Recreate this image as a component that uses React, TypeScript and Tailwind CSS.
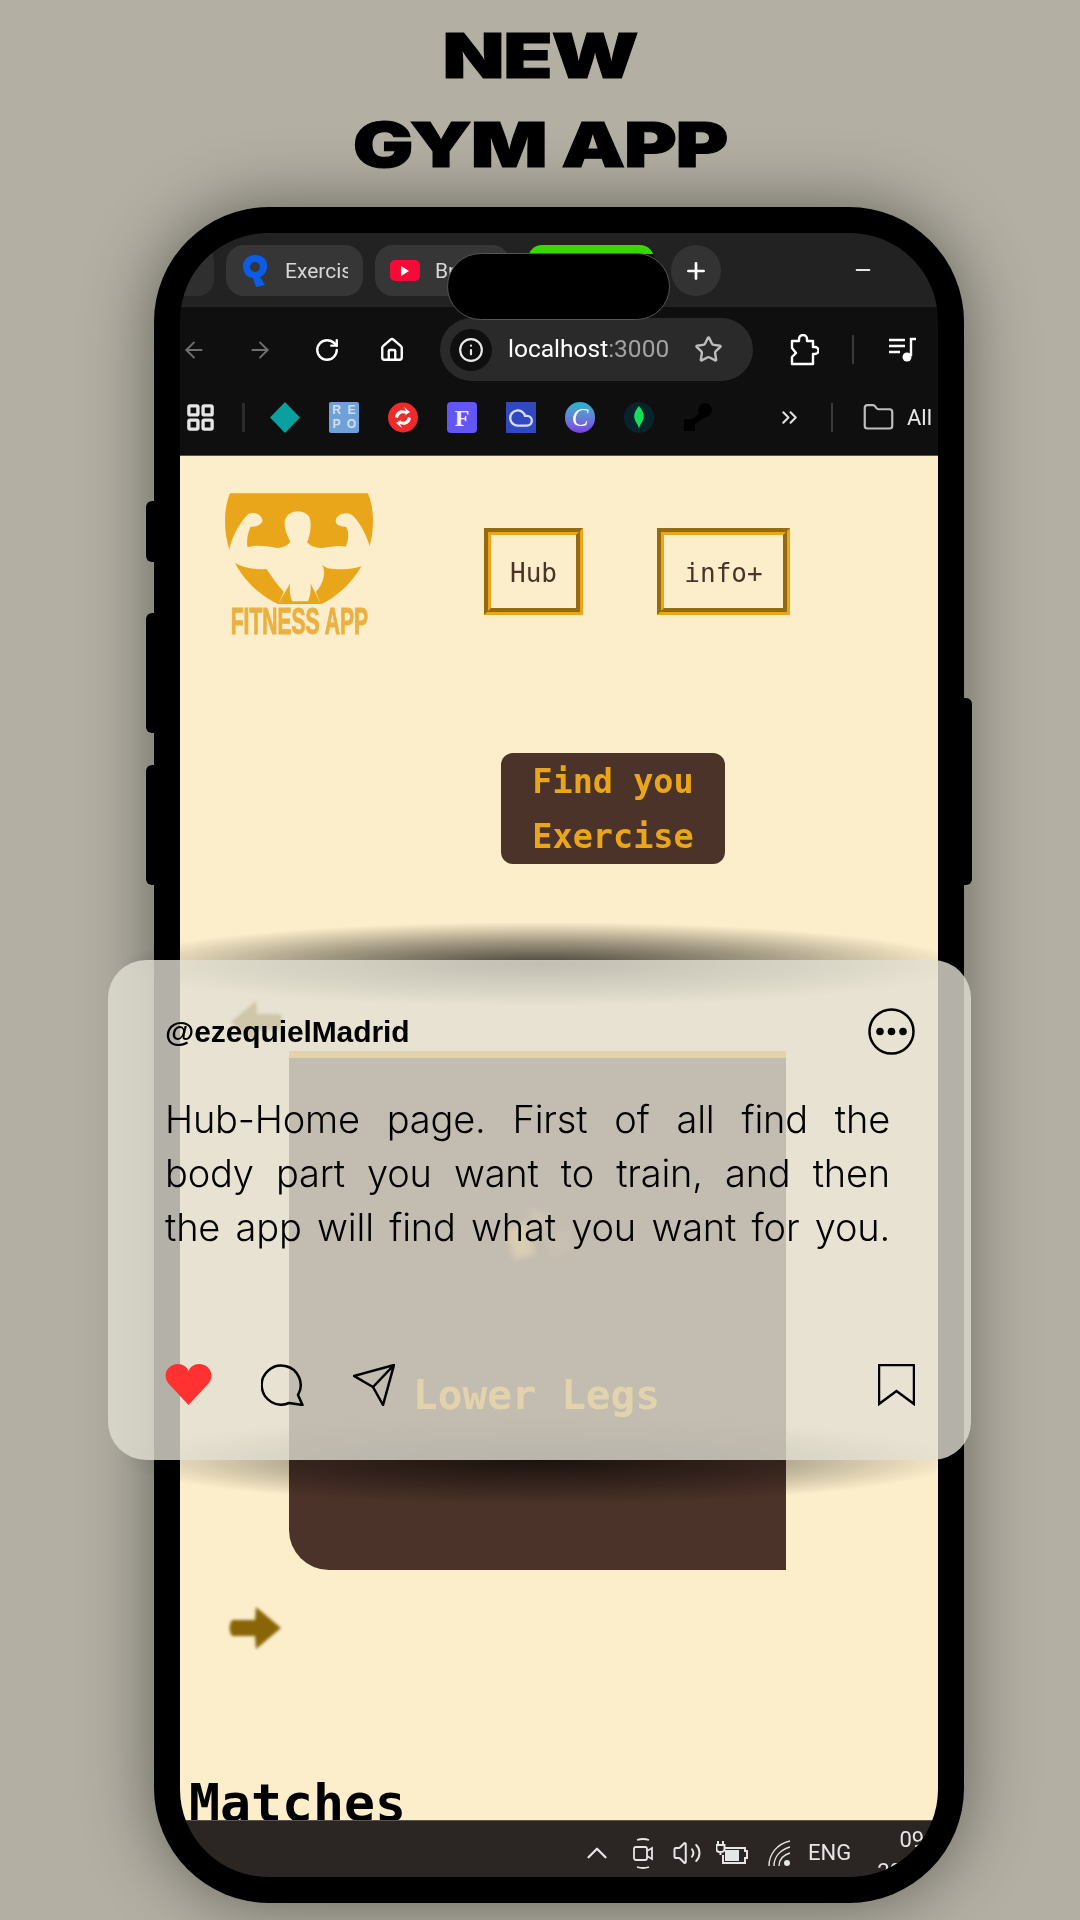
import React from 'react';
import { ArrowLeft, ArrowRight, ChevronUp, Cloud, Folder, House, Info, LayoutGrid, ChevronsRight, Minus, Plus, RotateCw, Star, Volume2 } from 'lucide-react';

const mono = { fontFamily: '"DejaVu Sans Mono", monospace' };

function FitnessLogo() {
  return (
    <div className="w-[148px] flex flex-col items-center">
      <svg width="148" height="112" viewBox="30 25 445 336" className="block">
        <path d="M45 25 H460 Q475 60 475 110 C475 230 400 320 320 358 H190 C105 320 30 230 30 110 Q30 60 45 25 Z" fill="#e9a61b" />
        <path
          d="M100 88 C115 80 140 88 143 107 C140 122 120 126 107 126 C98 145 94 170 98 188 C125 180 160 184 185 190 C205 190 222 182 226 170 C210 140 204 110 214 98 C226 74 272 74 284 98 C292 118 286 150 277 173 C287 184 300 190 320 190 C345 188 372 180 393 186 C403 165 403 140 394 126 C380 126 360 122 363 105 C368 88 395 78 414 92 C442 118 467 175 472 215 C464 244 420 258 360 253 C345 253 332 250 322 240 C335 262 325 300 303 322 L318 358 L287 296 C290 320 285 335 280 350 H232 C227 335 222 320 226 296 L190 358 L207 322 C185 298 170 275 155 253 C120 258 60 248 40 215 C43 170 70 118 100 88 Z"
          fill="#fceecb"
        />
      </svg>
      <div className="mt-[3px] h-[28px] leading-[28px] text-[36px] font-bold text-[#ebb041] whitespace-nowrap scale-x-[0.585] [-webkit-text-stroke:1px_#ebb041]" style={{ fontFamily: '"Liberation Sans Narrow", "Liberation Sans", sans-serif' }}>
        FITNESS APP
      </div>
    </div>
  );
}

function GroovedLink({ label, width }: { label: string; width: string }) {
  return (
    <a className={`${width} h-[87px] pt-[3px] flex items-center justify-center border-[7px] [border-style:groove] border-[#e9a61b] text-[26px] text-[#4b3329]`} style={mono}>
      {label}
    </a>
  );
}

function PageArrow({ flip }: { flip?: boolean }) {
  return (
    <svg width="56" height="46" viewBox="0 0 56 46" className={`blur-[1.5px] block ${flip ? 'rotate-180' : ''}`}>
      <path d="M5 15 H28 L29 2 L54 23 L29 44 L28 31 H5 Q0 23 5 15 Z" fill="#8a6508" />
    </svg>
  );
}

function BrowserTabs() {
  return (
    <div className="h-[74px] shrink-0 bg-[#222222] flex items-start pt-[12px]">
      <div className="w-[34px] h-[51px] bg-[#2f2f2f] rounded-r-[16px]" />
      <div className="ml-[12px] w-[137px] h-[51px] bg-[#363636] rounded-[18px] flex items-center pl-[16px]">
        <svg width="26" height="33" viewBox="0 0 26 33">
          <path d="M13 1 C22 1 26 7 25 14 C24 20 20 22 18 23 L23 31 L14 33 L11 24 C5 24 1 19 1 12 C1 6 6 1 13 1 Z M13 8 A5 5 0 1 0 13 18 A5 5 0 1 0 13 8 Z" fill="#0b5de8" fillRule="evenodd" />
        </svg>
        <span className="ml-[17px] mt-[3px] w-[63px] overflow-hidden whitespace-nowrap text-[21px] text-[#d8d8d8]" style={{ fontFamily: 'Roboto, sans-serif' }}>Exercis</span>
      </div>
      <div className="ml-[12px] w-[135px] h-[51px] bg-[#363636] rounded-[18px] flex items-center pl-[15px]">
        <div className="w-[30px] h-[21px] bg-[#f50a38] rounded-[5px] flex items-center justify-center">
          <svg width="10" height="10" viewBox="0 0 10 10"><path d="M1 0 L9 5 L1 10 Z" fill="#ffffff" /></svg>
        </div>
        <span className="ml-[15px] mt-[3px] text-[21px] text-[#d8d8d8]" style={{ fontFamily: 'Roboto, sans-serif' }}>Br</span>
      </div>
      <div className="ml-[18px] w-[126px] h-[62px] bg-[#0f0f10] rounded-t-[14px] overflow-hidden">
        <div className="h-[9px] bg-[#39d700] rounded-t-[14px]" />
      </div>
      <div className="ml-[17px] w-[50px] h-[51px] bg-[#333333] rounded-full flex items-center justify-center text-white">
        <Plus size={26} strokeWidth={2.5} />
      </div>
      <Minus size={22} strokeWidth={2} className="ml-[131px] mt-[14px] text-[#e6e6e6]" />
    </div>
  );
}

function ToolbarRow() {
  return (
    <div className="mt-[11px] h-[63px] flex items-center">
      <ArrowLeft size={26} strokeWidth={1.8} className="ml-[1px] text-[#6f6f6f]" />
      <ArrowRight size={26} strokeWidth={1.8} className="ml-[40px] text-[#6f6f6f]" />
      <RotateCw size={26} strokeWidth={2.2} className="ml-[41px] text-white" />
      <House size={26} strokeWidth={2.2} className="ml-[39px] text-white" />
      <div className="ml-[35px] w-[313px] h-[63px] bg-[#2a2a2a] rounded-full flex items-center pl-[10px]">
        <div className="w-[42px] h-[42px] bg-[#0f0f10] rounded-full flex items-center justify-center text-[#e8e8e8]">
          <Info size={26} strokeWidth={2} />
        </div>
        <span className="ml-[16px] text-[24.5px] text-white whitespace-nowrap" style={{ fontFamily: 'Roboto, sans-serif' }}>
          localhost<span className="text-[#a3a3a3]">:3000</span>
        </span>
        <Star size={29} strokeWidth={2} className="ml-auto mr-[30px] text-[#bdbdbd]" />
      </div>
      <svg width="31" height="32" viewBox="0 0 31 32" className="ml-[35px]" fill="none" stroke="#ffffff" strokeWidth="2.4" strokeLinejoin="round">
        <path d="M4 7 H11 V5 A4 4 0 0 1 19 5 V7 H25 V13 H27 A3.5 3.5 0 0 1 27 20 H25 V30 H4 V23 L8 19 L4 14 Z" />
      </svg>
      <div className="ml-[33px] w-[2px] h-[29px] bg-[#3a3a3a]" />
      <svg width="27" height="25" viewBox="0 0 27 25" className="ml-[35px]" fill="none" stroke="#ffffff" strokeWidth="2.4">
        <path d="M0 3 H16 M0 9 H16 M0 15 H11 M22 19 V2 H27" />
        <circle cx="18" cy="20" r="4.5" fill="#ffffff" stroke="none" />
      </svg>
    </div>
  );
}

function BookmarksRow() {
  return (
    <div className="mt-[21px] h-[31px] flex items-center">
      <LayoutGrid size={31} strokeWidth={2.6} className="ml-[5px] text-[#e5e5e5]" />
      <div className="ml-[26px] w-[3px] h-[29px] bg-[#2c2c2c]" />
      <div className="ml-[25px] flex items-center gap-[29px]">
        <svg width="30" height="31" viewBox="0 0 30 31"><path d="M15 0 L30 15.5 L15 31 L0 15.5 Z" fill="#0aa09f" /></svg>
        <div className="w-[30px] h-[31px] bg-[#6fa0d8] rounded-[2px] grid grid-cols-2 place-items-center text-[12px] leading-[13px] font-bold text-[#cfe0f2] py-[2px]" style={{ fontFamily: '"Liberation Sans", sans-serif' }}>
          <span>R</span><span>E</span><span>P</span><span>O</span>
        </div>
        <svg width="30" height="31" viewBox="0 0 30 31">
          <circle cx="15" cy="15.5" r="15" fill="#ee2a2a" />
          <path d="M7 15 C8 9 13 7 18 9 L16 5 L22 10 L16 14 L18 12 C14 10 11 12 10 16 Z M23 16 C22 22 17 24 12 22 L14 26 L8 21 L14 17 L12 19 C16 21 19 19 20 15 Z" fill="#ffffff" />
        </svg>
        <div className="w-[30px] h-[31px] bg-[#6257f5] rounded-[4px] flex items-center justify-center text-[24px] font-bold text-[#f0f0ff]" style={{ fontFamily: '"Liberation Serif", serif' }}>F</div>
        <div className="w-[30px] h-[31px] bg-[#3048c0] flex items-center justify-center text-[#d7dcf7]">
          <Cloud size={26} strokeWidth={2.2} />
        </div>
        <div className="w-[30px] h-[31px] rounded-full bg-linear-to-b from-[#12b5cb] to-[#7a3be0] flex items-center justify-center text-[25px] italic text-white" style={{ fontFamily: '"Liberation Serif", serif' }}>C</div>
        <div className="w-[30px] h-[31px] rounded-full bg-[#07242c] flex items-center justify-center">
          <svg width="12" height="23" viewBox="0 0 12 23"><path d="M6 0 C10 5 12 9 10 14 C9 17 7 18 6 23 C5 18 3 17 2 14 C0 9 2 5 6 0 Z" fill="#13e05a" /></svg>
        </div>
        <svg width="30" height="31" viewBox="0 0 30 31">
          <circle cx="22" cy="8" r="7" fill="#000000" />
          <path d="M17 10 L24 14 L12 22 L12 29 H1 V17 H10 Z" fill="#000000" />
        </svg>
      </div>
      <ChevronsRight size={25} strokeWidth={2} className="ml-[64px] text-[#e0e0e0]" />
      <div className="ml-[29px] w-[2px] h-[29px] bg-[#3a3a3a]" />
      <Folder size={33} strokeWidth={1.6} className="ml-[29px] text-[#bdbdbd]" />
      <span className="ml-[12px] text-[22px] text-[#e8e8e8]" style={{ fontFamily: 'Roboto, sans-serif' }}>All</span>
    </div>
  );
}

function PageBody() {
  return (
    <div className="flex-1 min-h-0 bg-[#fceecb] overflow-hidden relative">
      <div className="flex items-start pl-[45px] pt-[37px]">
        <FitnessLogo />
        <div className="ml-[111px] mt-[35px] flex gap-[74px]">
          <GroovedLink label="Hub" width="w-[99px]" />
          <GroovedLink label="info+" width="w-[133px]" />
        </div>
      </div>
      <button className="block mt-[117px] ml-[321px] w-[224px] h-[111px] bg-[#4b3329] rounded-[12px] text-[33.5px] font-bold leading-[55px] text-[#e9a61b]" style={mono}>
        Find you<br />Exercise
      </button>
      <div className="ml-[49px] mt-[135px]">
        <PageArrow flip />
      </div>
      <div className="ml-[109px] mt-[6px] w-[497px] h-[519px] bg-[#4b3329] rounded-bl-[40px] border-t-[7px] border-[#e9a61b] flex flex-col items-center">
        <svg width="74" height="56" viewBox="0 0 74 56" className="mt-[148px] blur-[3px] opacity-80">
          <path d="M4 26 L26 14 L34 48 L14 54 Z" fill="#d79a3a" />
          <path d="M28 2 L50 8 L44 24 L32 20 Z" fill="#8f6a50" />
          <path d="M44 30 L70 20 L72 44 L50 54 Z" fill="#6b4a3a" />
        </svg>
        <span className="mt-[109px] ml-[-2px] text-[41px] font-bold text-[#e9a61b] leading-[48px] blur-[0.5px]" style={mono}>Lower Legs</span>
      </div>
      <div className="ml-[47px] mt-[35px]">
        <PageArrow />
      </div>
      <h2 className="ml-[9px] mt-[122px] text-[51.5px] font-bold leading-[60px] text-black" style={mono}>Matches</h2>
    </div>
  );
}

function TaskBar() {
  return (
    <div className="h-[57px] shrink-0 bg-[#2b2523] border-t border-[#5a5450] flex items-center text-[#e6e6e6] overflow-hidden">
      <ChevronUp size={34} strokeWidth={1.6} className="ml-[400px] mt-[8px]" />
      <svg width="22" height="31" viewBox="0 0 22 31" className="ml-[18px] mt-[8px]" fill="none" stroke="currentColor" strokeWidth="1.8">
        <path d="M5 2 Q11 0 17 2 M5 29 Q11 31 17 29" />
        <rect x="2" y="9" width="13" height="13" rx="2" />
        <path d="M15 13 L20 10 V21 L15 18" />
      </svg>
      <Volume2 size={30} strokeWidth={1.6} className="ml-[18px] mt-[8px]" />
      <svg width="32" height="26" viewBox="0 0 32 26" className="ml-[14px] mt-[8px]" fill="none" stroke="currentColor" strokeWidth="2">
        <path d="M2 1 V5 M7 1 V5 M0.5 5 H8.5 V9 Q8.5 12 4.5 12 Q0.5 12 0.5 9 Z M4.5 12 V15" />
        <path d="M9 8 H29 V11 H31 V18 H29 V23 H7 V15" />
        <rect x="9" y="10" width="14" height="11" fill="currentColor" stroke="none" />
      </svg>
      <svg width="24" height="28" viewBox="0 0 24 28" className="ml-[19px] mt-[8px]" fill="none" stroke="currentColor" strokeWidth="1.4">
        <path d="M2 27 C2 15 10 5 23 2 M7 27 C7 18 13 11 23 8 M12 27 C12 21 16 16 23 14" />
        <circle cx="20" cy="24" r="3" fill="currentColor" stroke="none" />
      </svg>
      <span className="ml-[17px] mt-[6px] text-[22px]" style={{ fontFamily: 'Roboto, sans-serif' }}>ENG</span>
      <div className="ml-[26px] w-[47px] h-[57px] pt-[3px] text-[22px] leading-[32px] text-right whitespace-nowrap" style={{ fontFamily: 'Roboto, sans-serif' }}>
        <div>09</div>
        <div className="text-left">20</div>
      </div>
    </div>
  );
}

export default function App() {
  return (
    <div className="relative w-[1080px] h-[1920px] overflow-hidden bg-[#b3afa3]">
      <h1 className="pt-[11px] text-center text-[62px] leading-[89px] font-black text-black tracking-[-1px] [-webkit-text-stroke:1px_black] scale-x-[1.3]" style={{ fontFamily: 'Inter, "Liberation Sans", sans-serif' }}>
        NEW<br />GYM APP
      </h1>

      <div className="ml-[154px] mt-[18px] w-[810px] h-[1696px] bg-black rounded-[115px] p-[26px] shadow-[0_0_70px_rgba(0,0,0,0.45)]">
        <div className="h-full rounded-[88px] overflow-hidden flex flex-col blur-[0.6px]">
          <BrowserTabs />
          <div className="h-[149px] shrink-0 bg-[#0f0f10] border-b border-[#555555]">
            <ToolbarRow />
            <BookmarksRow />
          </div>
          <PageBody />
          <TaskBar />
        </div>
      </div>

      {/* dynamic island */}
      <div className="absolute left-[447px] top-[253px] w-[223px] h-[67px] bg-black rounded-[34px] border border-[#555555]" />

      {/* hardware buttons */}
      <div className="absolute left-[146px] top-[501px] w-[8px] h-[61px] bg-black rounded-l-[6px]" />
      <div className="absolute left-[146px] top-[613px] w-[8px] h-[120px] bg-black rounded-l-[6px]" />
      <div className="absolute left-[146px] top-[765px] w-[8px] h-[120px] bg-black rounded-l-[6px]" />
      <div className="absolute left-[964px] top-[698px] w-[8px] h-[187px] bg-black rounded-r-[6px]" />

      {/* soft shadow peeking out around the card */}
      <div className="absolute left-[120px] top-[922px] w-[840px] h-[84px] bg-[radial-gradient(closest-side,rgba(0,0,0,0.72),rgba(0,0,0,0.35)_55%,transparent)]" />
      <div className="absolute left-[120px] top-[1416px] w-[840px] h-[88px] bg-[radial-gradient(closest-side,rgba(0,0,0,0.64),rgba(0,0,0,0.3)_55%,transparent)]" />

      {/* post card */}
      <div className="absolute left-[108px] top-[960px] w-[863px] h-[500px] rounded-[38px] bg-[#e1dfd2]/80 pl-[57px] pr-[56px] pt-[48px] pb-[54px] flex flex-col">
        <div className="flex items-center justify-between h-[47px]">
          <span className="text-[30px] font-bold text-black tracking-[-0.1px]" style={{ fontFamily: '"Liberation Sans", sans-serif' }}>@ezequielMadrid</span>
          <svg width="47" height="47" viewBox="0 0 47 47">
            <circle cx="23.5" cy="23.5" r="22" fill="none" stroke="#000" strokeWidth="2.5" />
            <circle cx="12" cy="23.5" r="3.8" />
            <circle cx="23.5" cy="23.5" r="3.8" />
            <circle cx="35" cy="23.5" r="3.8" />
          </svg>
        </div>
        <p className="mt-[37px] w-[725px] text-[38px] leading-[54px] tracking-[-0.2px] text-black font-[350] text-justify [text-align-last:justify]" style={{ fontFamily: 'Inter, sans-serif' }}>
          <span className="block">Hub-Home page. First of all find the</span>
          <span className="block">body part you want to train, and then</span>
          <span className="block">the app will find what you want for you.</span>
        </p>
        <div className="mt-auto flex items-end">
          <svg width="47" height="42" viewBox="0 0 47 42">
            <path d="M23.5 41 L3 19 C-3 10 3 0 13 0 C18 0 22 3 23.5 7 C25 3 29 0 34 0 C44 0 50 10 44 19 Z" fill="#ff3131" />
          </svg>
          <svg width="43" height="42" viewBox="0 0 43 42" className="ml-[49px]" fill="none" stroke="#000" strokeWidth="2.5">
            <path d="M28 39 A19.5 19.5 0 1 1 37 31 L41.5 41 Z" strokeLinejoin="round" />
          </svg>
          <svg width="42" height="42" viewBox="0 0 42 42" className="ml-[49px]" fill="none" stroke="#000" strokeWidth="2.5">
            <path d="M41 1 L1 12 L20 23 L30 41 Z M41 1 L20 23" strokeLinejoin="round" />
          </svg>
          <svg width="37" height="42" viewBox="0 0 37 42" className="ml-auto" fill="none" stroke="#000" strokeWidth="2.5">
            <path d="M1 1 H36 V40 L18.5 27 L1 40 Z" />
          </svg>
        </div>
      </div>
    </div>
  );
}
